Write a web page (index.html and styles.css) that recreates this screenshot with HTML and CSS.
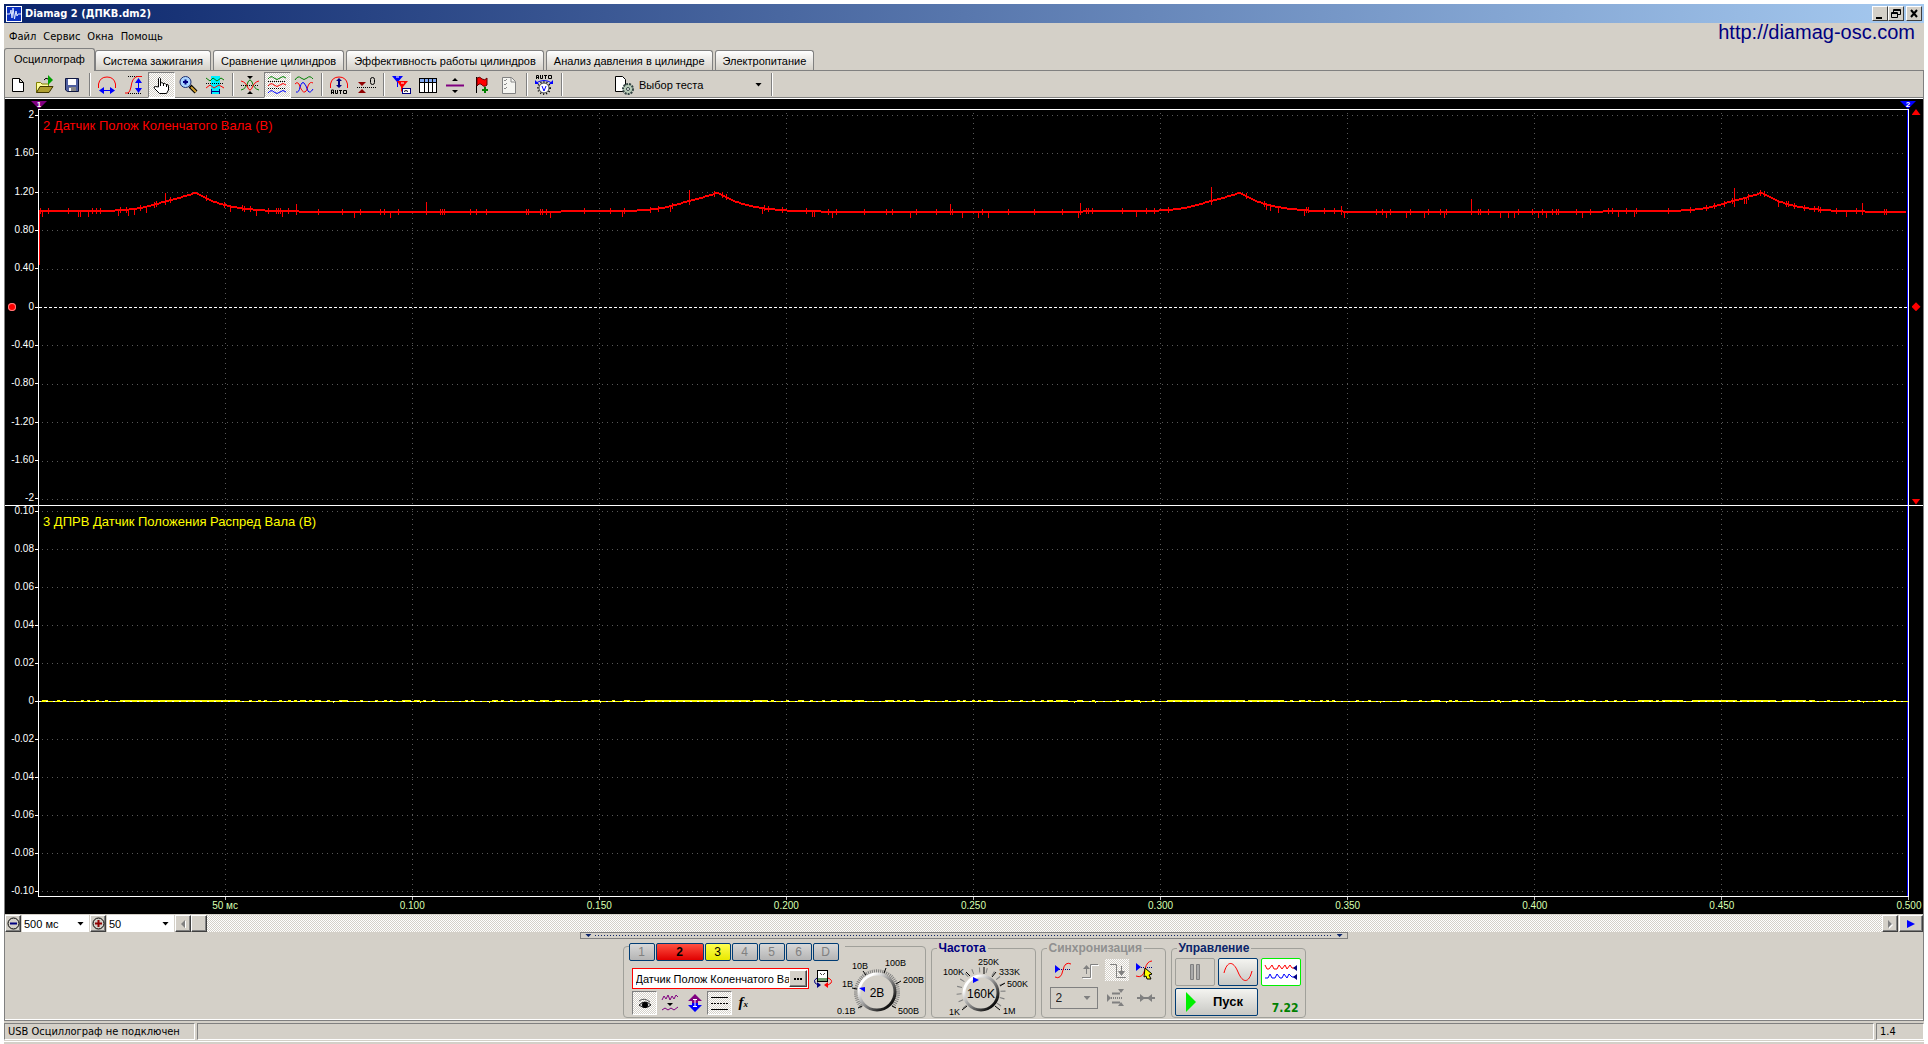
FILE: index.html
```html
<!DOCTYPE html>
<html lang="ru">
<head>
<meta charset="utf-8">
<title>Diamag 2 (ДПКВ.dm2)</title>
<link rel="stylesheet" href="styles.css">
</head>
<body>
<div class="window">
  <header class="titlebar">
    <svg class="app-icon" width="16" height="16" viewBox="0 0 16 16"><rect width="16" height="16" fill="#fff"/><rect x="1" y="1" width="14" height="14" fill="#0a2fc0"/><path d="M1 8H4L5 4L6 12L7 2L8.500 13L10 5L11 10L12 8H15" fill="none" stroke="#dfe8ff"/></svg>
    <h1 class="title">Diamag 2 (ДПКВ.dm2)</h1>
    <div class="win-buttons">
      <button class="win-btn" aria-label="Свернуть"><svg width="12" height="12"><path d="M2 10H8" stroke="#000" stroke-width="2"/></svg></button>
      <button class="win-btn" aria-label="Восстановить"><svg width="12" height="12" fill="none" stroke="#000"><path d="M3.500 4V1.500H10.500V6.500H8M3 2.500H11M1.500 4.500H7.500V9.500H1.500ZM1 5.500H8"/></svg></button>
      <button class="win-btn win-close" aria-label="Закрыть"><svg width="12" height="12"><path d="M3 2L9 9M9 2L3 9" stroke="#000" stroke-width="2"/></svg></button>
    </div>
  </header>

  <div class="menubar">
    <nav class="menu"><button>Файл</button><button>Сервис</button><button>Окна</button><button>Помощь</button></nav>
    <a class="site" href="http://diamag-osc.com">http://diamag-osc.com</a>
  </div>

  <div class="tabs" role="tablist">
    <button class="tab active" role="tab" aria-selected="true">Осциллограф</button>
    <button class="tab" role="tab">Система зажигания</button>
    <button class="tab" role="tab">Сравнение цилиндров</button>
    <button class="tab" role="tab">Эффективность работы цилиндров</button>
    <button class="tab" role="tab">Анализ давления в цилиндре</button>
    <button class="tab" role="tab">Электропитание</button>
  </div>

  <main class="page">
    <div class="toolbar">
      <button class="tool" aria-label="Новый"><svg width="20" height="20"><path d="M4.500 3.500H11.500L15.500 7.500V16.500H4.500ZM11.500 3.500V7.500H15.500" fill="#fff" stroke="#000"/></svg></button>
      <button class="tool" aria-label="Открыть"><svg width="20" height="20"><path d="M1.500 17.500V7.500H5.500L7 9H13.500V11.500" fill="#ffffa0" stroke="#808000"/><path d="M1.500 17.500L5 11.500H18L14 17.500Z" fill="#b0a030" stroke="#403800"/><path d="M9 5Q11 2 13 4" stroke="#000" fill="none"/><path d="M13 0L18 5L13 10Z" fill="#00a000"/></svg></button>
      <button class="tool" aria-label="Сохранить"><svg width="20" height="20"><path d="M3.500 3.500H16.500V16.500H5.500L3.500 15Z" fill="#5060a0" stroke="#101840"/><path d="M6 4H14V10H6Z" fill="#fff"/><path d="M7 12H14V16H7Z" fill="#888"/><path d="M7 13H9V16H7Z" fill="#fff"/></svg></button>
      <i class="sep"></i>
      <button class="tool" aria-label="Ширина"><svg width="20" height="20" fill="none"><path d="M1.500 13V9Q3 2 10 2Q17 2 18.500 9V13" stroke="red"/><path d="M4 15.500H16" stroke="#00f"/><path d="M2 15.500L7 12V19ZM18 15.500L13 12V19Z" fill="#00f"/></svg></button>
      <button class="tool" aria-label="Высота"><svg width="20" height="20" fill="none"><path d="M4 1.500H18M4 18.500H18" stroke="#000" stroke-dasharray="1 1"/><path d="M1 18H4Q6 17 7 12Q8 3 13 1.500H18" stroke="red"/><path d="M14.500 5V15" stroke="#00f"/><path d="M14.500 3L18 8H11ZM14.500 18L18 13H11Z" fill="#00f"/></svg></button>
      <button class="tool pressed" aria-label="Рука"><svg width="20" height="20"><path d="M7.500 12V3.500Q8.500 1.500 9.500 3.500V8.500Q10.500 6.500 12.500 8.500Q14 7.500 15 9.500Q17.500 9 17.500 11V15L15.500 18.500H8.500L3.500 13.500Q2 11.500 4.500 11.500Z" fill="#fff" stroke="#000"/><path d="M9.500 8V11M12.500 8V11M15.500 9V12" stroke="#000"/></svg></button>
      <button class="tool" aria-label="Лупа"><svg width="20" height="20"><path d="M12 11L18 17" stroke="#000" stroke-width="4"/><path d="M13 12L18 17" stroke="#d0a030" stroke-width="2"/><circle cx="7.500" cy="7" r="5.500" fill="#a8d4ff" stroke="#203070"/><path d="M5 7H10M7.500 4.500V9.500" stroke="#000080" stroke-width="2"/></svg></button>
      <button class="tool" aria-label="Интервал"><svg width="20" height="20" fill="none"><path d="M6 1H15V19H6Z" fill="#00f0ff"/><path d="M1 3L5 6L8 3L12 6L16 3L19 5" stroke="#008000"/><path d="M1 8.500H19" stroke="#000" stroke-dasharray="1 1"/><path d="M1 13L5 10L9 13L14 10L19 13" stroke="red"/><path d="M6.500 14V19M14.500 14V19M7 16.500H14" stroke="#000080"/></svg></button>
      <i class="sep"></i>
      <button class="tool" aria-label="Совместить"><svg width="20" height="20" fill="none"><path d="M1 10.500H19" stroke="#000" stroke-dasharray="1 1"/><path d="M1 15Q6 14 8 7Q10 3 12 7Q14 14 19 15" stroke="#008000"/><path d="M1 6Q6 7 8 13Q10 17 12 13Q14 7 19 6" stroke="red"/><path d="M7 1H13L10 4ZM7 19H13L10 16Z" fill="#000"/></svg></button>
      <button class="tool pressed" aria-label="Раздельно"><svg width="20" height="20" fill="none"><path d="M1 4Q4 0 7 3T13 3T19 3" stroke="#008000"/><path d="M1 11Q4 7 7 10T13 10T19 10" stroke="red"/><path d="M1 18Q4 14 7 17T13 17T19 17" stroke="#00f"/><path d="M1 6.500H19M1 13.500H19" stroke="#000" stroke-dasharray="1 1"/></svg></button>
      <button class="tool" aria-label="Наложить"><svg width="20" height="20" fill="none"><path d="M1 5Q4 0 7 3T13 3T19 4" stroke="#008000"/><path d="M1 9Q3 6 5 9Q8 18 11 17Q13 16 14 11Q16 6 19 8" stroke="red"/><path d="M2 17Q5 18 6 12Q8 6 10 8Q12 10 14 16Q16 19 19 14" stroke="#00f"/></svg></button>
      <i class="sep"></i>
      <button class="tool" aria-label="Авто масштаб"><svg width="20" height="20" fill="none"><path d="M1.500 13V9Q3 2 10 2Q17 2 18.500 9V13" stroke="red"/><path d="M10 3L13 6H11V10H13L10 13L7 10H9V6H7Z" fill="#000080"/><g stroke="#000"><path d="M2.500 19V15H4.500V19M2 17.500H5M6.500 15V18.500H8.500V15M10 15.500H13M11.500 15V19M14.500 15.500H17.500V18.500H14.500Z"/></g></svg></button>
      <button class="tool" aria-label="Обнулить"><svg width="20" height="20" fill="none"><path d="M1 12.500H20" stroke="#000" stroke-dasharray="1 1"/><path d="M2 7H10L6 11ZM2 18H10L6 14Z" fill="#900000"/><rect x="14.500" y="2.500" width="4" height="7" rx="2" stroke="#000"/></svg></button>
      <i class="sep"></i>
      <button class="tool" aria-label="Фильтр"><svg width="20" height="20" fill="none"><path d="M1 1H12L7 7V12H6V7Z" fill="#00f"/><path d="M6 6H17L12 12V18L10 16V12Z" fill="red"/><path d="M5 2H8M10 8H13" stroke="#fff"/><rect x="11.500" y="13.500" width="8" height="5" fill="#fff" stroke="#000080"/><path d="M13 16.500L15 15.500L17 16.500" stroke="#000"/></svg></button>
      <button class="tool" aria-label="Таблица"><svg width="20" height="20"><rect x="1.500" y="3.500" width="17" height="14" fill="#fff" stroke="#000"/><path d="M2 4H18V7H2Z" fill="#80a8f0"/><path d="M2 7.500H18M6.500 4V17M10.500 4V17M14.500 4V17" stroke="#000"/></svg></button>
      <button class="tool" aria-label="Разделить"><svg width="20" height="20"><path d="M1 10.500H19" stroke="#800080" stroke-width="2"/><path d="M7 6H13L10 3ZM7 15H13L10 18Z"/></svg></button>
      <button class="tool" aria-label="Флаг"><svg width="20" height="20"><path d="M4.500 2V18" stroke="#000"/><path d="M5 3Q8 1 10 4Q13 6 15 3V10Q12 13 9 9Q7 8 5 11Z" fill="red" stroke="#600"/><path d="M10 15H16M13 12V18" stroke="#008000" stroke-width="2"/></svg></button>
      <button class="tool" aria-label="Список"><svg width="20" height="20"><path d="M3.500 2.500H12.500L16.500 6.500V18.500H3.500Z" fill="#f4f4f0" stroke="#808080"/><path d="M5 5L6 6L8 4M5 9L6 10L8 8M5 13L6 14L8 12M12 3V7H16" stroke="#888" fill="none"/></svg></button>
      <i class="sep"></i>
      <button class="tool" aria-label="Автонастройка"><svg width="20" height="22" fill="none"><path d="M2.500 5V1.500H4.500V5M2 3.500H5M6.500 1V4.500H8.500V1M10 1.500H13M11.500 1V5M14.500 1.500H17.500V4.500H14.500Z" stroke="#000"/><path d="M2 9Q10 4 18 9" stroke="#00f"/><path d="M1 6V10H5ZM19 6V10H15Z" fill="#00f"/><circle cx="10" cy="14" r="6" stroke="#000" stroke-width="2" stroke-dasharray="1 2"/><circle cx="10" cy="14" r="5" fill="#fff" stroke="#444"/><path d="M8 12L10 17L12 12" stroke="#00f"/></svg></button>
      <i class="sep"></i>
      <label class="test-select">
        <svg width="20" height="20"><path d="M1.500 1.500H8.500L11.500 4.500V16.500H1.500Z" fill="#fff" stroke="#000"/><circle cx="14" cy="14" r="5" fill="#b8ccb8" stroke="#344" stroke-width="2" stroke-dasharray="2 1"/><circle cx="14" cy="14" r="1.500" fill="#fff" stroke="#344"/></svg>
        <select aria-label="Выбор теста"><option>Выбор теста</option></select>
      </label>
      <i class="sep"></i>
    </div>

    <section class="chart" aria-label="Осциллограмма">
      <div class="cursors">
        <span class="cursor cursor-1">1</span>
        <span class="cursor cursor-2">2</span>
      </div>
      <div class="panel panel-a">
        <div class="scale">
          <span>2</span><span>1.60</span><span>1.20</span><span>0.80</span><span>0.40</span><span>0</span><span>-0.40</span><span>-0.80</span><span>-1.20</span><span>-1.60</span><span>-2</span>
          <i class="zero-dot"></i>
        </div>
        <div class="plot"><svg class="trace" data-trace="crank"></svg><h2 class="plot-title red">2 Датчик Полож Коленчатого Вала (В)</h2></div>
        <div class="gutter"><i class="mark mark-up"></i><i class="mark mark-mid"></i><i class="mark mark-down"></i></div>
      </div>
      <div class="panel panel-b">
        <div class="scale">
          <span>0.10</span><span>0.08</span><span>0.06</span><span>0.04</span><span>0.02</span><span>0</span><span>-0.02</span><span>-0.04</span><span>-0.06</span><span>-0.08</span><span>-0.10</span>
        </div>
        <div class="plot"><svg class="trace" data-trace="cam"></svg><h2 class="plot-title yellow">3 ДПРВ Датчик Положения Распред Вала (В)</h2></div>
        <div class="gutter"></div>
      </div>
      <div class="ruler"><span></span><span>50 мс</span><span>0.100</span><span>0.150</span><span>0.200</span><span>0.250</span><span>0.300</span><span>0.350</span><span>0.400</span><span>0.450</span><span>0.500</span></div>
    </section>

    <div class="scrollrow">
      <button class="bevel" aria-label="Уменьшить"><svg width="13" height="13"><circle cx="6.500" cy="6.500" r="5.500" fill="none" stroke="#000"/><path d="M3 6.500H10" stroke="#000080" stroke-width="2"/></svg></button>
      <label class="drop"><select aria-label="Развёртка"><option>500 мс</option></select></label>
      <button class="bevel" aria-label="Увеличить"><svg width="13" height="13"><circle cx="6.500" cy="6.500" r="5.500" fill="none" stroke="#000"/><path d="M3 6.500H10M6.500 3V10" stroke="#900000" stroke-width="2"/></svg></button>
      <label class="drop"><select aria-label="Масштаб"><option>50</option></select></label>
      <div class="scrollbar">
        <button class="bevel" aria-label="Влево"><svg width="12" height="12"><path d="M8 2V10L4 6Z" fill="#808080"/><path d="M8.500 3V10" stroke="#fff"/></svg></button>
        <i class="thumb bevel"></i>
        <button class="bevel push" aria-label="Вправо"><svg width="12" height="12"><path d="M5 3L9 7L5 11Z" fill="#fff"/><path d="M4 2L8 6L4 10Z" fill="#808080"/></svg></button>
      </div>
      <button class="bevel wide" aria-label="Воспроизвести"><svg width="12" height="12"><path d="M2 2L10 6L2 10Z" fill="#00f"/></svg></button>
    </div>

    <div class="splitter"><i></i><b></b><i></i></div>

    <div class="controls">
      <div class="group channels" role="group" aria-label="Каналы">
        <div class="channel-col">
          <div class="channel-row">
            <button class="ch">1</button><button class="ch ch-red">2</button><button class="ch ch-yellow">3</button><button class="ch">4</button><button class="ch">5</button><button class="ch">6</button><button class="ch">D</button>
          </div>
          <div class="name-row">
            <div class="name-box"><input type="text" aria-label="Название канала" value="Датчик Полож Коленчатого Вала"><button class="bevel dots" aria-label="Выбрать"><svg width="10" height="4"><path d="M1 2H9" stroke="#000" stroke-width="2" stroke-dasharray="2 1"/></svg></button></div>
            <svg width="20" height="20"><rect x="4.500" y="1.500" width="10" height="11" fill="#fff" stroke="#000"/><path d="M5 9H14V12H5Z" fill="#70a070"/><path d="M7 4L9 6M12 4L10 6" stroke="#444"/><path d="M4 9Q0 11 2 14L5 16" fill="none" stroke="#000080"/><path d="M15 9Q20 11 18 14L15 16" fill="none" stroke="red"/><path d="M4 13L8 16L4 19Z" fill="#000080"/><path d="M15 13L11 16L15 19Z" fill="red"/></svg>
          </div>
          <div class="icon-row">
            <button class="tool pressed" aria-label="Видимость"><svg width="20" height="20"><path d="M4 8Q9 4 15 9" stroke="#555" fill="none"/><path d="M4 12Q10 6 16 12Q10 17 4 12Z" fill="#ccc" stroke="#222"/><circle cx="10" cy="12" r="3"/></svg></button>
            <button class="tool" aria-label="Сглаживание"><svg width="20" height="20" fill="none" stroke="#800080"><path d="M2 7L4 3L6 6L8 2L10 7L12 3L14 6L16 2L18 4"/><path d="M2 17L5 15L8 17L11 15L14 17L18 14"/><path d="M7 10H13L10 13Z" fill="#000" stroke="none"/></svg></button>
            <button class="tool" aria-label="Инверсия"><svg width="20" height="20"><path d="M10 1L17 8H13V10H7V8H3Z" fill="#800080"/><path d="M10 19L3 12H7V10H13V12H17Z" fill="#00f"/><path d="M10 6V14M8 6.500H12M8 13.500H12" stroke="#fff"/></svg></button>
            <button class="tool pressed" aria-label="Линии"><svg width="20" height="20" stroke="#000"><path d="M1 4.500H18M1 16.500H18"/><path d="M1 10.500H18" stroke-dasharray="2 1"/></svg></button>
            <button class="tool fx" aria-label="Формула">f<small>x</small></button>
          </div>
        </div>
        <svg class="knob" width="90" height="60" viewBox="0 0 90 60">
          <defs><linearGradient id="rim" x1="0" y1="0" x2="1" y2="1"><stop offset="0.200" stop-color="#fff"/><stop offset="0.900" stop-color="#000"/></linearGradient></defs>
          <path d="M25 51A21 21 0 1 1 55 51" fill="none" stroke="#808080" stroke-width="4" stroke-dasharray="1 1"/>
          <path d="M25 50L21 52M55 50L59 52M20 33L15 32M29 19L26 15M47 17L49 12M59 28L64 25" stroke="#000"/>
          <circle cx="40" cy="36" r="18" fill="#d4d0c8" stroke="url(#rim)" stroke-width="3"/>
          <path d="M22 32L28 31V36Z" fill="#00f"/>
          <text class="knob-value" x="40" y="41">2В</text>
          <text x="0" y="58">0.1В</text><text x="5" y="31">1В</text><text x="15" y="13">10В</text><text x="48" y="10">100В</text><text x="66" y="27">200В</text><text x="61" y="58">500В</text>
        </svg>
      </div>

      <fieldset class="group rate">
        <legend>Частота</legend>
        <svg class="knob" width="90" height="60" viewBox="0 0 90 60">
          <path d="M24 50A22 22 0 1 1 56 50" fill="none" stroke="#808080" stroke-width="5" stroke-dasharray="1 6"/>
          <path d="M26 49L21 53M54 49L59 53M29 19L25 15M43 17V10M51 20L55 15M59 29L64 26" stroke="#000"/>
          <circle cx="40" cy="36" r="17" fill="#d4d0c8" stroke="url(#rim)" stroke-width="3"/>
          <path d="M32 20L38 23L32 26Z" fill="#00f"/>
          <text class="knob-value" x="40" y="41">160K</text>
          <text x="8" y="58">1K</text><text x="2" y="18">100K</text><text x="37" y="8">250K</text><text x="58" y="18">333K</text><text x="66" y="30">500K</text><text x="62" y="57">1M</text>
        </svg>
      </fieldset>

      <fieldset class="group sync">
        <legend>Синхронизация</legend>
        <div class="sync-row">
          <button class="tool" aria-label="Уровень"><svg width="20" height="20" fill="none"><path d="M2 9.500H18" stroke="#000080" stroke-dasharray="1 1"/><path d="M2 17Q8 20 10 10Q12 1 18 4" stroke="red"/><path d="M2 5L7 9L2 13Z" fill="#00f"/></svg></button>
          <button class="tool" aria-label="Фронт"><svg width="20" height="20" fill="none"><path d="M3 18.500H11.500V5.500H19" stroke="#fff"/><path d="M2 17.500H10.500V4.500H18" stroke="#808080"/><path d="M6.500 8V14" stroke="#808080"/><path d="M6.500 5L10 9H3Z" fill="#808080"/></svg></button>
          <button class="tool pressed flat" aria-label="Спад"><svg width="20" height="20" fill="none"><path d="M2 4.500H8.500V17.500H18" stroke="#808080"/><path d="M13.500 6V12" stroke="#808080"/><path d="M13.500 16L17 11H10Z" fill="#808080"/></svg></button>
          <button class="tool" aria-label="Автоуровень"><svg width="20" height="20" fill="none"><path d="M2 7.500H18" stroke="#000080" stroke-dasharray="1 1"/><path d="M1 16Q8 19 10 9Q12 1 17 1" stroke="red"/><path d="M1 3L6 7L1 11Z" fill="#00f"/><path d="M10 8L17 14L14 15L16 19L12 19L11 16L9 17Z" fill="#ff0" stroke="#000"/></svg></button>
        </div>
        <div class="sync-row">
          <label class="sync-drop"><select disabled aria-label="Канал синхронизации"><option>2</option></select></label>
          <button class="tool" disabled aria-label="Гистерезис"><svg width="20" height="20" fill="none"><path d="M6 5.500H14M6 14.500H14" stroke="#808080" stroke-width="2"/><path d="M5 10H16" stroke="#808080" stroke-width="2" stroke-dasharray="1 1"/><path d="M1 6L5 10L1 14ZM12 1H18L15 5ZM12 18H18L15 14Z" fill="#808080"/></svg></button>
          <button class="tool" disabled aria-label="Сдвиг"><svg width="20" height="20"><path d="M1 10H19" stroke="#808080" stroke-width="2"/><path d="M4 6L9 10L4 14ZM16 6L11 10L16 14Z" fill="#808080"/></svg></button>
        </div>
      </fieldset>

      <fieldset class="group run">
        <legend>Управление</legend>
        <div class="run-grid">
          <button class="big off" disabled aria-label="Пауза"><svg width="14" height="18"><path d="M2.500 1.500H5.500V16.500H2.500ZM8.500 1.500H11.500V16.500H8.500Z" fill="#aaa" stroke="#808080"/></svg></button>
          <button class="big" aria-label="Синус"><svg width="30" height="22" fill="none"><path d="M1 12C4 0 10 -1 15 11S26 22 29 10" stroke="red"/></svg></button>
          <button class="big lit" aria-label="Сигналы"><svg width="34" height="22" fill="none"><path d="M1 4L3 8L5 8L8 4L10 8L13 8L15 4L18 8L21 4L23 8L26 4L28 7L32 7" stroke="red"/><path d="M1 17H4L6 13L8 17H11L13 13L16 17H18L20 13L23 17L25 13L28 16H32" stroke="#00f"/><path d="M29 7L33 4V10ZM29 16L33 13V19Z" fill="#000080"/></svg></button>
          <button class="big start"><svg width="12" height="20"><path d="M1 0L11 10L1 20Z" fill="#00f000"/></svg><span>Пуск</span></button>
          <output class="version">7.22</output>
        </div>
      </fieldset>
    </div>
  </main>

  <footer class="status"><span class="pane first">USB Осциллограф не подключен</span><span class="pane fill"></span><span class="pane last">1.4</span></footer>
</div>
<script src="script.js"></script>
</body>
</html>
```
FILE: styles.css
```css
:root {
  --face: #d4d0c8;
  --shade: #808080;
  --ui: "DejaVu Sans Condensed", "DejaVu Sans", sans-serif;
  --sans: "Liberation Sans", Arial, sans-serif;
}
* { box-sizing: border-box; }
body { margin: 0; background: #fff; font: 11px/14px var(--sans); color: #000; }
button, input, select { font: inherit; color: inherit; padding: 0; margin: 0; border: 0; background: none; border-radius: 0; }
select { appearance: none; opacity: 1; }
svg { display: block; flex: none; }
.window { display: flex; flex-direction: column; min-height: 100vh; margin: 0 4px; padding: 4px 0 0; background: var(--face); background-clip: content-box; }

.titlebar { display: flex; align-items: center; height: 19px; padding: 0 2px; background: linear-gradient(90deg, #0a246a, #a6caf0); }
.title { flex: 1; margin: 0 3px; color: #fff; font: bold 11px/18px var(--ui); }
.win-buttons { display: flex; }
.win-btn { display: grid; place-items: center; width: 16px; height: 15px; background: var(--face); border: 1px solid; border-color: #fff #404040 #404040 #fff; }
.win-close { margin-left: 2px; }

.menubar { display: flex; justify-content: space-between; height: 25px; }
.menu { display: flex; gap: 7px; padding: 1px 5px 0; font: 11px/26px var(--ui); }
.site { padding-right: 9px; font: 20px/18px var(--sans); color: #000080; text-decoration: none; }

.tabs { display: flex; align-items: flex-end; gap: 2px; height: 23px; border-bottom: 1px solid var(--shade); }
.tab { height: 20px; padding: 0 7px; border: 1px solid var(--shade); border-bottom: 0; border-radius: 3px 3px 0 0; background: linear-gradient(#fff, var(--face)); white-space: nowrap; }
.tab.active { height: 23px; margin: 0 -2px -1px 0; padding: 0 9px 3px; background: var(--face); }

.page { flex: 1; display: flex; flex-direction: column; border: 1px solid var(--shade); border-top: 0; }
.toolbar { display: flex; align-items: center; height: 28px; border-bottom: 1px solid #fff; box-shadow: inset 0 -1px var(--shade); }
.tool { display: grid; place-items: center start; width: 27px; height: 26px; padding-left: 2px; border: 1px solid transparent; }
.pressed { border-color: var(--shade) #fff #fff var(--shade); background: repeating-conic-gradient(#fff 0 25%, var(--face) 0 50%) 0 0 / 2px 2px; }
.sep { width: 2px; height: 23px; margin: 0 3px; background: linear-gradient(90deg, var(--shade) 50%, #fff 50%); }
.test-select { position: relative; display: flex; align-items: center; gap: 5px; width: 154px; margin-left: 48px; }
.test-select select { flex: 1; }
.test-select::after, .drop::after, .sync-drop::after { content: ""; position: absolute; right: 6px; width: 7px; height: 4px; background: #000; clip-path: polygon(0 0, 100% 0, 50% 100%); pointer-events: none; }

.chart { flex: 1; display: flex; flex-direction: column; background: #000; color: #fff; font-size: 10px; }
.cursors { position: relative; height: 10px; }
.cursor { position: absolute; top: 2px; width: 16px; height: 8px; font: bold 8px/7px var(--sans); text-align: center; clip-path: polygon(0 0, 100% 0, 50% 100%); }
.cursor-1 { left: 26px; background: #800080; }
.cursor-2 { right: 7px; background: #00f; }
.panel { display: grid; grid-template-columns: 33px minmax(0, 1fr) 14px; }
.panel-a { flex: 395 1 0; min-height: 240px; border-bottom: 1px solid #fff; }
.panel-b { flex: 391 1 0; min-height: 240px; }
.scale { position: relative; display: flex; flex-direction: column; justify-content: space-between; padding: 5px 4px 6px 0; text-align: right; }
.panel-a .scale { padding-top: 6px; }
.scale span { position: relative; height: 0; line-height: 0; }
.scale span::after { content: ""; position: absolute; right: -4px; width: 3px; height: 1px; background: #fff; }
.zero-dot { position: absolute; left: 3px; top: calc(50% - 4px); width: 8px; height: 8px; border-radius: 4px; background: red; box-shadow: inset 0 0 0 1px #ff8080; }
.plot { position: relative; border: 0 solid #fff; border-width: 0 1px; box-shadow: inset -1px 0 #00f; }
.panel-a .plot { border-top-width: 1px; }
.panel-b .plot { border-bottom-width: 1px; }
.trace { position: absolute; inset: 0; width: 100%; height: 100%; shape-rendering: crispEdges; }
.plot-title { position: absolute; left: 4px; top: 8px; margin: 0; font: 13px/16px var(--sans); }
.red { color: red; }
.yellow { color: #ff0; }
.gutter { display: flex; flex-direction: column; justify-content: space-between; align-items: center; }
.mark { width: 9px; height: 6px; background: red; }
.mark-up { clip-path: polygon(50% 0, 100% 100%, 0 100%); }
.mark-mid { height: 9px; clip-path: polygon(50% 0, 100% 50%, 50% 100%, 0 50%); }
.mark-down { clip-path: polygon(0 0, 100% 0, 50% 100%); }
.ruler { display: flex; justify-content: space-between; height: 17px; padding: 0 14px 0 33px; color: #d8ffb0; line-height: 18px; }
.ruler span { position: relative; display: flex; justify-content: center; width: 0; white-space: nowrap; }
.ruler span + span::before { content: ""; position: absolute; top: 0; width: 1px; height: 3px; background: #c0c0c0; }

.scrollrow { display: flex; height: 18px; padding-top: 1px; gap: 1px; }
.bevel { display: grid; place-items: center; width: 16px; height: 17px; background: var(--face); border: 1px solid; border-color: #fff #404040 #404040 #fff; box-shadow: inset -1px -1px var(--shade); }
.wide { width: 24px; }
.drop { position: relative; display: flex; align-items: center; width: 67px; background: #fff; }
.drop select { width: 100%; padding-left: 2px; }
.drop::after { right: 5px; }
.scrollbar { flex: 1; display: flex; background: repeating-conic-gradient(#fff 0 25%, var(--face) 0 50%) 0 0 / 2px 2px; }
.push { margin-left: auto; }

.splitter { align-self: center; display: flex; align-items: center; gap: 4px; width: 40%; min-width: 680px; height: 7px; padding: 0 4px; border: 1px solid var(--shade); }
.splitter i { width: 6px; height: 3px; background: #0a246a; clip-path: polygon(0 0, 100% 0, 50% 100%); }
.splitter b { flex: 1; height: 1px; background: repeating-linear-gradient(90deg, #0a246a 0 1px, transparent 1px 3px); }

.controls { display: flex; justify-content: center; align-items: flex-end; gap: 5px; padding: 3px 0 1px; height: 81px; border-bottom: 1px solid #fff; }
.group { min-width: 0; margin: 0; padding: 0; border: 1px solid #a0a09a; border-radius: 4px; }
.group legend { margin-left: 5px; font: bold 12px/12px var(--sans); color: #000080; }
.channels { display: flex; width: 303px; height: 72px; }
.channel-col { width: 214px; padding-left: 5px; }
.channel-row { display: flex; gap: 1px; margin-top: -4px; width: 216px; background: var(--face); }
.ch { width: 26px; height: 18px; border: 1px solid #003c74; border-radius: 2px; background: linear-gradient(#d8d8d8, #b4b4b4); color: #808080; font-size: 12px; }
.ch-red { width: 48px; background: linear-gradient(#ff5040, #e00000); color: #000; font-weight: bold; }
.ch-yellow { background: linear-gradient(#ffff50, #e8e800); color: #000; }
.name-row { display: flex; align-items: center; gap: 4px; margin: 7px 0 0 3px; }
.name-box { display: flex; align-items: center; width: 177px; height: 21px; padding: 0 1px 0 3px; border: 1px solid red; background: #fff; }
.name-box input { flex: 1; min-width: 0; outline: 0; }
.dots { width: 18px; }
.icon-row { display: flex; margin: 2px 0 0 3px; }
.icon-row .tool { width: 25px; height: 24px; }
.fx { display: block; padding-left: 6px; font: italic bold 15px/20px "Liberation Serif", serif; text-align: left; }
.fx small { font-size: 9px; }
.knob { margin: 9px 0 0 -1px; font: 9px var(--sans); }
.knob-value { font-size: 12px; text-anchor: middle; }
.rate { width: 105px; height: 76px; }
.rate .knob { margin: 3px 0 0 9px; }
.sync { width: 125px; height: 76px; }
.sync legend { color: #909090; }
.sync-row { display: flex; justify-content: space-between; align-items: center; height: 24px; margin: 4px 8px 0; }
.sync-row .tool { width: 24px; height: 22px; }
.flat { border-color: transparent; }
.sync-drop { position: relative; display: flex; align-items: center; width: 48px; height: 22px; border: 1px solid var(--shade); font-size: 12px; }
.sync-drop select { width: 100%; padding-left: 5px; color: #202020; }
.sync-drop::after { background: var(--shade); }
.run { width: 135px; height: 76px; }
.run legend { color: #0a246a; }
.run-grid { display: grid; grid-template-columns: repeat(3, 40px); gap: 2px 3px; padding: 4px 3px; align-items: center; }
.big { display: grid; place-items: center; height: 28px; border: 1px solid #003c74; border-radius: 2px; background: linear-gradient(#f4f4f0, #c8c8c4); }
.off { border-color: #a0a09a; background: var(--face); }
.lit { border-color: #00f000; background: #fff; }
.start { grid-column: span 2; grid-template-columns: 12px 1fr; padding: 0 9px; font: bold 13px/16px var(--sans); }
.start span { padding-left: 12px; }
.version { padding: 12px 2px 0 0; color: #008000; font: bold 12px/16px "DejaVu Sans Condensed", sans-serif; text-align: right; }

.status { display: flex; gap: 2px; height: 21px; padding: 2px 0 1px; border-bottom: 1px solid #fff; margin-bottom: 2px; font: 11px/15px var(--ui); }
.pane { height: 17px; padding: 0 3px; border: 1px solid; border-color: var(--shade) #fff #fff var(--shade); white-space: nowrap; }
.first { width: 191px; }
.fill { flex: 1; }
.last { width: 48px; }
```
FILE: script.js
```js
// Draws the grid and the sampled signal of each plot to the plot's current size.
const NS = "http://www.w3.org/2000/svg";
const SPAN = 1869;
const PERIOD = 522;
const FIRST_PEAK = 156;
const BUMP = [[-90, 0], [-60, 2], [-45, 5], [-32, 9], [-20, 12], [-10, 15], [0, 18], [8, 15], [20, 9], [30, 6], [45, 3], [65, 1], [90, 0]];
const SPIKES = [[126, 9], [257, 8], [387, 10], [650, 12], [911, 8], [1041, 9], [1172, 15], [1302, 6], [1432, 13], [1695, 13], [1823, 9]];

function random(seed) {
  return () => (seed = (seed * 16807) % 2147483647) / 2147483647;
}

function path(svg, d, stroke, width, dash) {
  const p = document.createElementNS(NS, "path");
  p.setAttribute("d", d);
  p.setAttribute("fill", "none");
  p.setAttribute("stroke", stroke);
  p.setAttribute("stroke-width", width);
  if (dash) p.setAttribute("stroke-dasharray", dash);
  svg.append(p);
}

function bump(x) {
  const centre = FIRST_PEAK + PERIOD * Math.round((x - FIRST_PEAK) / PERIOD);
  const t = x - centre;
  for (let i = 1; i < BUMP.length; i++) {
    const [a, u] = BUMP[i - 1], [b, v] = BUMP[i];
    if (t >= a && t <= b) return u + (v - u) * (t - a) / (b - a);
  }
  return 0;
}

function draw(svg) {
  const w = svg.clientWidth, h = svg.clientHeight;
  svg.replaceChildren();
  const top = 5, bottom = h - 6, mid = Math.floor((top + bottom) / 2) + 0.5;
  let grid = "";
  for (let i = 0; i <= 10; i++) {
    if (i === 5) continue;
    grid += `M3 ${Math.round(top + (bottom - top) * i / 10) + 0.5}H${w - 2}`;
  }
  for (let i = 1; i < 10; i++) grid += `M${Math.round((w + 1) * i / 10) - 0.5} 3V${h}`;
  path(svg, grid, "#585858", 1, "1 4");
  path(svg, `M0 ${mid}H${w}`, "#fff", 1, "3 2");

  const k = w / SPAN;
  if (svg.dataset.trace === "crank") {
    const rnd = random(77), unit = (bottom - top) / 384;
    const base = mid - 96 * unit;
    let line = `M0 ${base + 53 * unit}V${base}`, ticks = "";
    for (let x = 1; x < SPAN; x += 2) {
      const y = Math.round(base - (bump(x) + Math.sin(x / 83) * 0.5) * unit);
      line += `L${x * k} ${y}`;
      const r = rnd();
      if (r < 0.12) ticks += `M${Math.round(x * k) + 0.5} ${y - 3}V${y + 3}`;
      else if (r < 0.17) ticks += `M${Math.round(x * k) + 0.5} ${y}V${y + 6}`;
    }
    for (const [x, up] of SPIKES) ticks += `M${Math.round(x * k) + 0.5} ${base - (bump(x) + up) * unit}V${base - bump(x) + 3}`;
    path(svg, line, "#f00", 2);
    path(svg, ticks, "#f00", 1);
  } else {
    const rnd = random(31);
    let noise = "";
    for (let x = 3; x < SPAN; x += 3) {
      const dense = bump(x + 10) > 2 ? 0.95 : 0.35;
      if (rnd() < dense) noise += `M${Math.round(x * k)} ${mid - 1}h3`;
      else if (rnd() < 0.04) noise += `M${Math.round(x * k)} ${mid + 1}h1`;
    }
    path(svg, `M0 ${mid}H${w}`, "#ff0", 1);
    path(svg, `M0 ${mid}H${w}`, "#fff", 1, "2 5");
    path(svg, noise, "#ff0", 1);
  }
}

const drawAll = () => document.querySelectorAll(".trace").forEach(draw);
addEventListener("resize", drawAll);
drawAll();
```
